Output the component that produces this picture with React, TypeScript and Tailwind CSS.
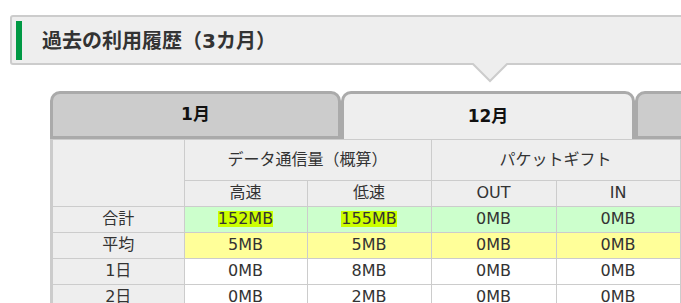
const font = { fontFamily: '"DejaVu Sans", "Noto Sans CJK JP", sans-serif' };

type Row = { label: string; cells: string[]; tone: "total" | "avg" | "day" };

const rows: Row[] = [
  { label: "合計", cells: ["152MB", "155MB", "0MB", "0MB"], tone: "total" },
  { label: "平均", cells: ["5MB", "5MB", "0MB", "0MB"], tone: "avg" },
  { label: "1日", cells: ["0MB", "8MB", "0MB", "0MB"], tone: "day" },
  { label: "2日", cells: ["0MB", "2MB", "0MB", "0MB"], tone: "day" },
];

const toneBg = {
  total: "bg-[#ccffcc]",
  avg: "bg-[#ffff99]",
  day: "bg-white",
};

function Tab({ label, active, className }: { label?: string; active?: boolean; className: string }) {
  return (
    <div
      className={`flex h-[48px] items-center justify-center rounded-t-[10px] border-[3px] border-[#aaa] text-[17px] font-bold text-[#111] ${
        active ? "border-b-0 bg-[#eee]" : "bg-[#ccc]"
      } ${className}`}
    >
      {label}
    </div>
  );
}

export default function App() {
  return (
    <div className="h-[303px] w-[681px] overflow-hidden bg-white text-[#333]" style={font}>
      <div className="w-[960px]">
        {/* section heading */}
        <div className="relative ml-[10px] mt-[15px] flex h-[50px] items-stretch rounded-[3px] border-2 border-[#ccc] bg-[#eee] pb-[3px] pl-[4px] pt-[4px]">
          <div className="w-[6px] bg-[#009944]" />
          <h2 className="ml-[20px] flex items-center text-[20px] font-bold text-[#333]">過去の利用履歴（3カ月）</h2>
          <svg className="absolute left-[460px] top-full" width="36" height="20" viewBox="0 0 36 20">
            <polygon points="0,0 36,0 18,18" fill="#eee" />
            <polyline points="0,0 18,18 36,0" fill="none" stroke="#ccc" strokeWidth="2" />
          </svg>
        </div>

        {/* month tabs */}
        <div className="ml-[50px] mt-[26px] flex w-[880px]">
          <Tab label="1月" className="w-[291px]" />
          <Tab label="12月" active className="w-[294px]" />
          <Tab className="flex-1" />
        </div>

        {/* usage table */}
        <div className="ml-[50px] w-[880px] border-l-[3px] border-t border-[#ccc]">
          <table className="w-full table-fixed border-collapse text-center text-[16px]">
            <colgroup>
              <col className="w-[131px]" />
              <col className="w-[123px]" />
              <col className="w-[124px]" />
              <col className="w-[125px]" />
              <col className="w-[124px]" />
              <col className="w-[124px]" />
              <col />
            </colgroup>
            <thead className="bg-[#eee] font-normal">
              <tr className="h-[40px]">
                <th rowSpan={2} className="border-b border-r border-[#ccc] font-normal" />
                <th colSpan={2} className="border-b border-r border-[#ccc] font-normal">
                  データ通信量（概算）
                </th>
                <th colSpan={2} className="border-b border-r border-[#ccc] font-normal">
                  パケットギフト
                </th>
                <th colSpan={2} className="border-b border-[#ccc] font-normal" />
              </tr>
              <tr className="h-[26px]">
                <th className="border-b border-r border-[#ccc] font-normal">高速</th>
                <th className="border-b border-r border-[#ccc] font-normal">低速</th>
                <th className="border-b border-r border-[#ccc] font-normal">OUT</th>
                <th className="border-b border-r border-[#ccc] font-normal">IN</th>
                <th className="border-b border-r border-[#ccc] font-normal" />
                <th className="border-b border-[#ccc] font-normal" />
              </tr>
            </thead>
            <tbody>
              {rows.map((row) => (
                <tr key={row.label} className={`h-[26px] ${toneBg[row.tone]}`}>
                  <td className="border-b border-r border-[#ccc] bg-[#eee]">{row.label}</td>
                  {row.cells.map((cell, i) => (
                    <td key={i} className="border-b border-r border-[#ccc]">
                      {row.tone === "total" && i < 2 ? (
                        <span className="inline-block h-[16px] bg-[#ccff00] leading-[16px]">{cell}</span>
                      ) : (
                        cell
                      )}
                    </td>
                  ))}
                  <td className="border-b border-r border-[#ccc]" />
                  <td className="border-b border-[#ccc]" />
                </tr>
              ))}
            </tbody>
          </table>
        </div>
      </div>
    </div>
  );
}
